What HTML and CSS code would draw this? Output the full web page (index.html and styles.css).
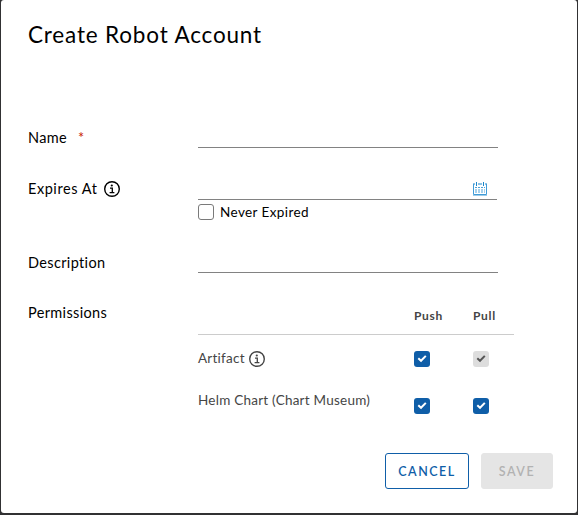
FILE: index.html
```html
<!DOCTYPE html>
<html lang="en">
<head>
<meta charset="utf-8">
<title>Create Robot Account</title>
<link rel="stylesheet" href="styles.css">
</head>
<body>
<svg class="defs" aria-hidden="true">
  <symbol id="info" viewBox="0 0 16 16"><circle cx="8" cy="8" r="7.3" fill="none" stroke="currentColor" stroke-width="1.4"/><circle cx="7.8" cy="4.5" r="1.1" fill="currentColor"/><path d="M6 7.1H8.3V11.7M5.6 11.7H10.4" fill="none" stroke="currentColor" stroke-width="1.3"/></symbol>
  <symbol id="check" viewBox="0 0 16 16"><path d="M4.3 7.3L7 9.8L11.8 4.9" fill="none" stroke="currentColor" stroke-width="2"/></symbol>
</svg>
<form class="modal">
  <h1 class="title">Create Robot Account</h1>
  <div class="row row-name">
    <label class="label"><span>Name</span><span class="required">*</span></label>
    <div class="field line"></div>
  </div>
  <div class="row row-expires">
    <label class="label"><span class="t-expires">Expires At</span><svg class="info"><use href="#info"/></svg></label>
    <div class="expires">
      <div class="field date line">
        <svg class="calendar" viewBox="0 0 16 16"><path d="M1 2H3M6 2H10M13 2H15" stroke="#8cc3e6" stroke-width="2"/><path d="M1.5 2V12.5H14.5V2" fill="none" stroke="#3f9bd8"/><path d="M4.5 0V4M11.5 0V4" stroke="#1c86cb"/><path d="M3 5.5H13" stroke="#4ba1d8" stroke-dasharray="2 1"/><path d="M3 9H13" stroke="#a6d1ec" stroke-width="4" stroke-dasharray="2 1"/><path d="M1 13.5H15" stroke="#9dcbe8"/></svg>
      </div>
      <label class="never"><span class="box"></span><span>Never Expired</span></label>
    </div>
  </div>
  <div class="row row-description">
    <label class="label">Description</label>
    <div class="field line"></div>
  </div>
  <div class="row row-permissions">
    <span class="label">Permissions</span>
    <div class="permissions">
      <div class="prow head"><span></span><span>Push</span><span>Pull</span></div>
      <div class="prow artifact"><span class="name"><span>Artifact</span><svg class="info"><use href="#info"/></svg></span><svg class="tick"><use href="#check"/></svg><svg class="tick disabled"><use href="#check"/></svg></div>
      <div class="prow helm"><span class="name">Helm Chart (Chart Museum)</span><svg class="tick"><use href="#check"/></svg><svg class="tick"><use href="#check"/></svg></div>
    </div>
  </div>
  <div class="actions">
    <button type="button" class="btn cancel">CANCEL</button>
    <button type="button" class="btn save" disabled>SAVE</button>
  </div>
</form>
</body>
</html>
```
FILE: styles.css
```css
* { box-sizing: border-box; }
body { margin: 0; height: 515px; overflow: hidden; padding: 0 1px 2px; background: #313133; font-family: Lato, "Open Sans", sans-serif; color: #000; font-variant-ligatures: none; }
.defs { position: absolute; width: 0; height: 0; }
.modal { height: 513px; background: #fff; border-radius: 3px; padding: 22px 24px 24px 27px; display: flex; flex-direction: column; }
.title { margin: 0 0 78px; height: 26px; font-size: 22.5px; line-height: 26px; font-weight: 400; letter-spacing: .83px; white-space: nowrap; }
.row { display: grid; grid-template-columns: 170px 1fr; flex: none; font-size: 14.5px; letter-spacing: .35px; }
.label { display: flex; align-items: center; height: 22px; margin-top: 1px; line-height: 22px; white-space: nowrap; }
.field { width: 300px; height: 22px; }
.line { border-bottom: 1px solid #828282; }
.row-name { height: 52px; }
.required { color: #c92100; margin-left: 11px; }
.t-expires { letter-spacing: .55px; }
.info { width: 16px; height: 16px; flex: none; }
.label .info { margin-left: 7px; }
.row-expires { height: 73px; }
.row-expires .label { margin-top: 0; }
.date { display: flex; justify-content: flex-end; width: 299px; padding-right: 9px; }
.calendar { width: 16px; height: 16px; margin-top: 4px; }
.never { display: flex; align-items: center; gap: 6px; height: 16px; margin-top: 4px; font-size: 13.5px; line-height: 16px; letter-spacing: .4px; white-space: nowrap; }
.box { width: 16px; height: 16px; border: 1px solid #7a7a7a; border-radius: 3px; }
.row-description { height: 51px; }
.row-permissions .label { margin-top: 0; }
.permissions { width: 316px; color: #454545; font-size: 13.5px; letter-spacing: .24px; }
.prow { display: grid; grid-template-columns: 216px 59px 1fr; }
.head { height: 33px; border-bottom: 1px solid #ccc; font-size: 12px; font-weight: 700; line-height: 28px; letter-spacing: .7px; }
.artifact { height: 47px; padding-top: 16px; }
.helm { height: 32px; padding-top: 16px; }
.name { display: flex; height: 16px; line-height: 15px; white-space: nowrap; }
.name .info { margin-left: 4px; }
.helm .name { margin-top: -5px; }
.tick { width: 16px; height: 16px; border-radius: 3px; background: #0f5ea8; color: #fff; }
.disabled { background: #ddd; color: #565656; }
.actions { margin-top: auto; display: flex; justify-content: flex-end; gap: 12px; }
.btn { height: 36px; padding: 0; border: 1px solid #0f5ea8; border-radius: 3px; background: #fff; color: #0f5ea8; font: 600 12.5px/36px Lato, sans-serif; letter-spacing: 1.5px; }
.cancel { width: 84px; }
.save { width: 72px; border-color: #e5e5e5; background: #e5e5e5; color: #b2b2b2; }
```
